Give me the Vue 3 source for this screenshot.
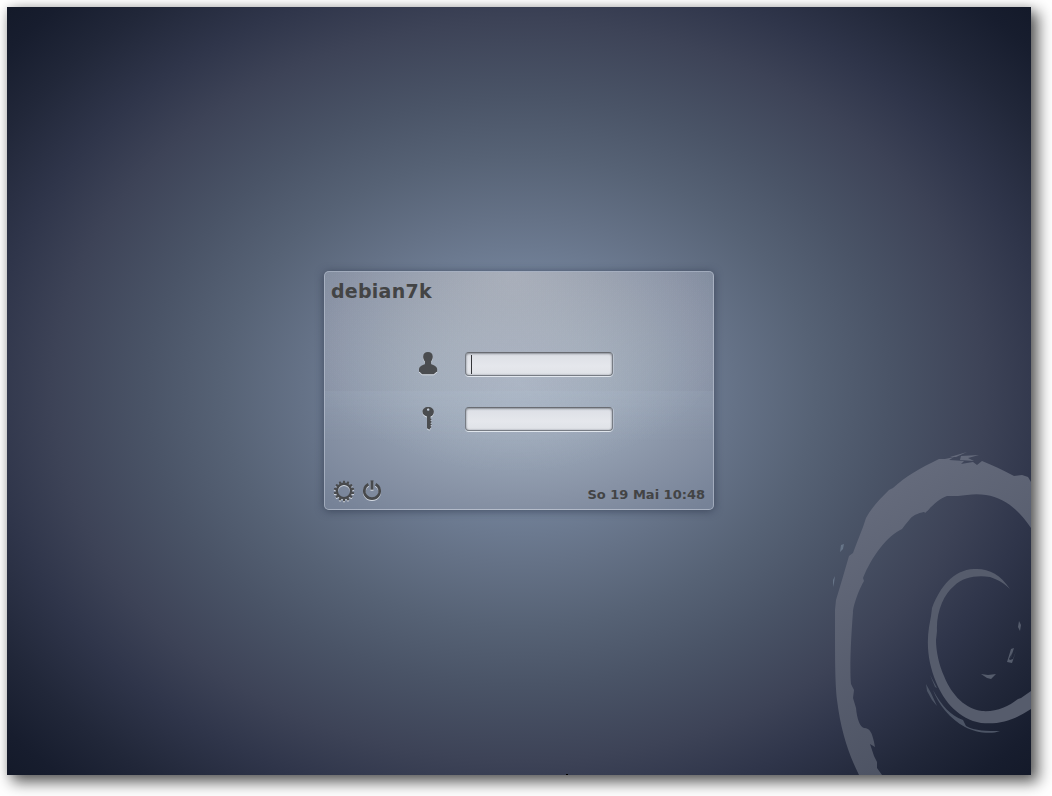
<script setup>
import { ref } from 'vue'

const host = ref('debian7k')
const clock = ref('So 19 Mai 10:48')
const user = ref('')
const password = ref('')
const teeth = Array.from({ length: 14 }, (_, i) => (i * 360) / 14)
</script>

<template>
  <div class="page">
    <main class="screen">
      <svg class="swirl" viewBox="820 440 211 335" width="211" height="335">
        <defs>
          <linearGradient id="outer" gradientUnits="userSpaceOnUse" x1="850" y1="500" x2="1020" y2="740">
            <stop offset="0" stop-color="#666c7d" />
            <stop offset="1" stop-color="#484e5e" />
          </linearGradient>
        </defs>
        <path
          fill="url(#outer)"
          d="M859 775C849 755 841 732 837 700C835 680 835 660 835 610L836 600L842 580L849 556L853 553L856 545L863 527L866 518C872 507 880 499 889 490L893 488C905 477 920 468 939 459L945 459L954 457L949 460L964 461L961 464L973 462L977 465L982 461C992 465 1003 470 1014 476L1022 475L1028 477L1031 482V528C1019 510 1005 498 986 495C976 493 966 495 958 496L947 496C940 498 933 505 927 511C920 513 914 514 910 519L905 525L902 529C887 536 872 556 863 578L864 581C856 595 853 609 853 612C850 650 850 675 851 684L854 690L853 698L856 708C857 719 860 727 864 728C870 728 872 733 874 742L875 747L870 744L874 756L877 762L877 768L882 775Z"
        />
        <path
          fill="url(#outer)"
          d="M950 457L967 452L956 457ZM961 456L979 455L968 458L974 461L960 460ZM923 510L930 508L925 513Z"
        />
        <path fill="#667487" d="M841 545L844 544L843 549L840 552ZM833 580L835 576L834 583L833 587Z" />
        <path
          fill="#565c6c"
          d="M1010 589C1000 574 988 568 974 569C953 570 940 587 932 608L931 616L929 627C926 647 929 665 936 682C944 702 959 719 981 723C1003 725 1017 718 1031 709V691L1021 698L1018 699C1008 707 996 712 982 711C966 709 952 696 944 676C939 665 936 651 936 640L937 631C936 612 944 594 954 586C963 577 977 575 990 577C999 580 1005 584 1010 589Z"
        />
        <path
          fill="#4c5465"
          d="M926 684L931 693L937 706L932 700L927 691ZM930 675L937 688L935 687ZM933 690C942 706 950 715 963 720L966 726C975 731 987 731 1000 731C990 735 974 732 965 727C950 719 938 704 933 690Z"
        />
        <path
          fill="#555c6c"
          fill-rule="evenodd"
          d="M981 674L988 675L996 674L991 679L987 678ZM1019 621L1021 625L1020 631L1018 627ZM1011 649L1014 648L1010 660L1013 659L1016 651L1012 663L1007 662ZM1012 653L1009 659L1010 660Z"
        />
      </svg>

      <form class="panel" @submit.prevent>
        <h1 class="host">{{ host }}</h1>

        <div class="fields">
          <label class="row">
            <svg class="icon etched" viewBox="0 0 22 26" width="22" height="26">
              <path
                d="M11 1C14 1 15.8 3 15.8 5.7C15.8 8 14.7 9.3 14.1 10.7V13C15.7 14.3 20.2 14.7 20.2 18.6V20.7C19 21 18 22.1 16.7 23.2H5.2C4 22 3.2 20.9 2 20.7V18.6C2 14.7 6.4 14.3 8 13V10.7C7.2 9.3 6.1 8 6.1 5.7C6.1 3 8 1 11 1Z"
              />
            </svg>
            <span class="entry"><span v-if="!user" class="caret"></span>{{ user }}</span>
          </label>
          <label class="row">
            <svg class="icon etched" viewBox="0 0 22 26" width="22" height="26">
              <path
                fill-rule="evenodd"
                d="M11.2 1C14.6 1 16.9 3.1 16.9 5.8C16.9 8.4 15.2 10.1 13.6 10.6V12.5L14.6 13.4L13.4 14.6L14.8 16L13.4 17.2L14.8 18.6L13.4 19.8L14.4 21L12.3 23.8L10 22.3V10.6C7.4 9.9 5.5 8.4 5.5 5.8C5.5 3.1 7.8 1 11.2 1ZM11.2 2.5A1.2 1.2 0 1 0 11.2 4.9A1.2 1.2 0 1 0 11.2 2.5Z"
              />
            </svg>
            <span class="entry">{{ password }}</span>
          </label>
        </div>

        <footer class="bar">
          <div class="actions">
            <svg class="etched" viewBox="0 0 22 22" width="22" height="22">
              <circle class="ring" cx="11" cy="11" r="7.1" stroke-width="2.2" />
              <path
                v-for="angle in teeth"
                :key="angle"
                d="M9.3 4L10.2 .7H11.8L12.7 4Z"
                :transform="`rotate(${angle} 11 11)`"
              />
            </svg>
            <svg class="etched" viewBox="0 0 22 22" width="22" height="22">
              <path class="ring" stroke-width="2.7" d="M7.4 4.2A7.7 7.7 0 1 0 14.6 4.2" />
              <path class="ring" stroke-width="3" d="M11 .4V9.7" />
            </svg>
          </div>
          <time class="clock">{{ clock }}</time>
        </footer>
      </form>
      <i class="speck"></i>
    </main>
  </div>
</template>

<style>
body {
  margin: 0;
  background: #fff;
}
</style>

<style scoped>
.page {
  box-sizing: border-box;
  width: 1052px;
  height: 796px;
  padding: 7px;
  overflow: hidden;
  background: #fff;
  font-family: "DejaVu Sans", sans-serif;
}
.screen {
  position: relative;
  display: flex;
  align-items: center;
  justify-content: center;
  width: 1024px;
  height: 768px;
  background: radial-gradient(
    ellipse 675px 535px at 50% 50%,
    #7888a1 0%,
    #718097 22%,
    #657287 32%,
    #566275 44%,
    #4a5467 55%,
    #3d4357 69%,
    #2f354a 79%,
    #212739 90%,
    #171d2e 99%,
    #141a2a 104%
  );
  box-shadow: 6px 6px 14px 1px rgba(0, 0, 0, 0.65), 0 0 8px rgba(0, 0, 0, 0.1);
}
.swirl {
  position: absolute;
  right: 0;
  bottom: 0;
}
.panel {
  box-sizing: border-box;
  position: relative;
  display: flex;
  flex-direction: column;
  width: 390px;
  height: 239px;
  margin-bottom: 1px;
  border: 1px solid rgba(190, 199, 213, 0.6);
  border-radius: 5px;
  background:
    linear-gradient(rgba(200, 200, 200, 0.03) 119px, rgba(200, 215, 230, 0.09) 119px, rgba(200, 215, 230, 0) 170px),
    radial-gradient(ellipse 245px 200px at 188px 0, rgba(178, 182, 192, 0.75), rgba(160, 168, 181, 0) 100%),
    radial-gradient(ellipse 275px 165px at 194px 112px, #a7b5c6 0%, #9ba8b9 34%, #8792a5 70%, #768297 100%);
  box-shadow: 0 1px 8px rgba(30, 39, 58, 0.55);
  color: #434445;
}
.host {
  margin: 0;
  padding: 8px 6px 1px;
  font-size: 19px;
  line-height: 22px;
  letter-spacing: 0.25px;
}
.fields {
  display: flex;
  flex-direction: column;
  gap: 29px;
  padding: 48px 0 0 92px;
}
.row {
  display: flex;
  align-items: flex-start;
  height: 26px;
}
.icon {
  flex: none;
  margin-right: 26px;
}
.etched {
  overflow: visible;
  fill: #4a4c4f;
  filter: drop-shadow(0 1px 0.4px rgba(228, 233, 240, 0.85));
}
.ring {
  fill: none;
  stroke: #47494c;
}
.entry {
  box-sizing: border-box;
  display: flex;
  align-items: center;
  width: 148px;
  height: 24px;
  margin-top: 1px;
  padding: 0 5px;
  border: 1px solid #777c84;
  border-top-color: #696c72;
  border-radius: 4px;
  background: linear-gradient(#dcdfe5, #e5e7ec 60%, #dfe2e7);
  box-shadow: inset 0 1px 2px rgba(70, 75, 85, 0.45), inset 0 0 2px rgba(90, 95, 105, 0.5),
    0 1px 0 rgba(235, 240, 246, 0.85), 1px 0 0 rgba(220, 226, 234, 0.4);
}
.caret {
  width: 1px;
  height: 19px;
  background: #34363a;
}
.bar {
  display: flex;
  align-items: center;
  justify-content: space-between;
  height: 24px;
  margin-top: auto;
  padding: 0 8px 6px;
}
.actions {
  display: flex;
  gap: 6px;
}
.clock {
  padding-top: 7px;
  font-size: 13px;
  font-weight: bold;
  line-height: 16px;
}
.speck {
  position: absolute;
  left: 559px;
  bottom: 0;
  width: 2px;
  height: 1px;
  background: #000;
}
</style>
